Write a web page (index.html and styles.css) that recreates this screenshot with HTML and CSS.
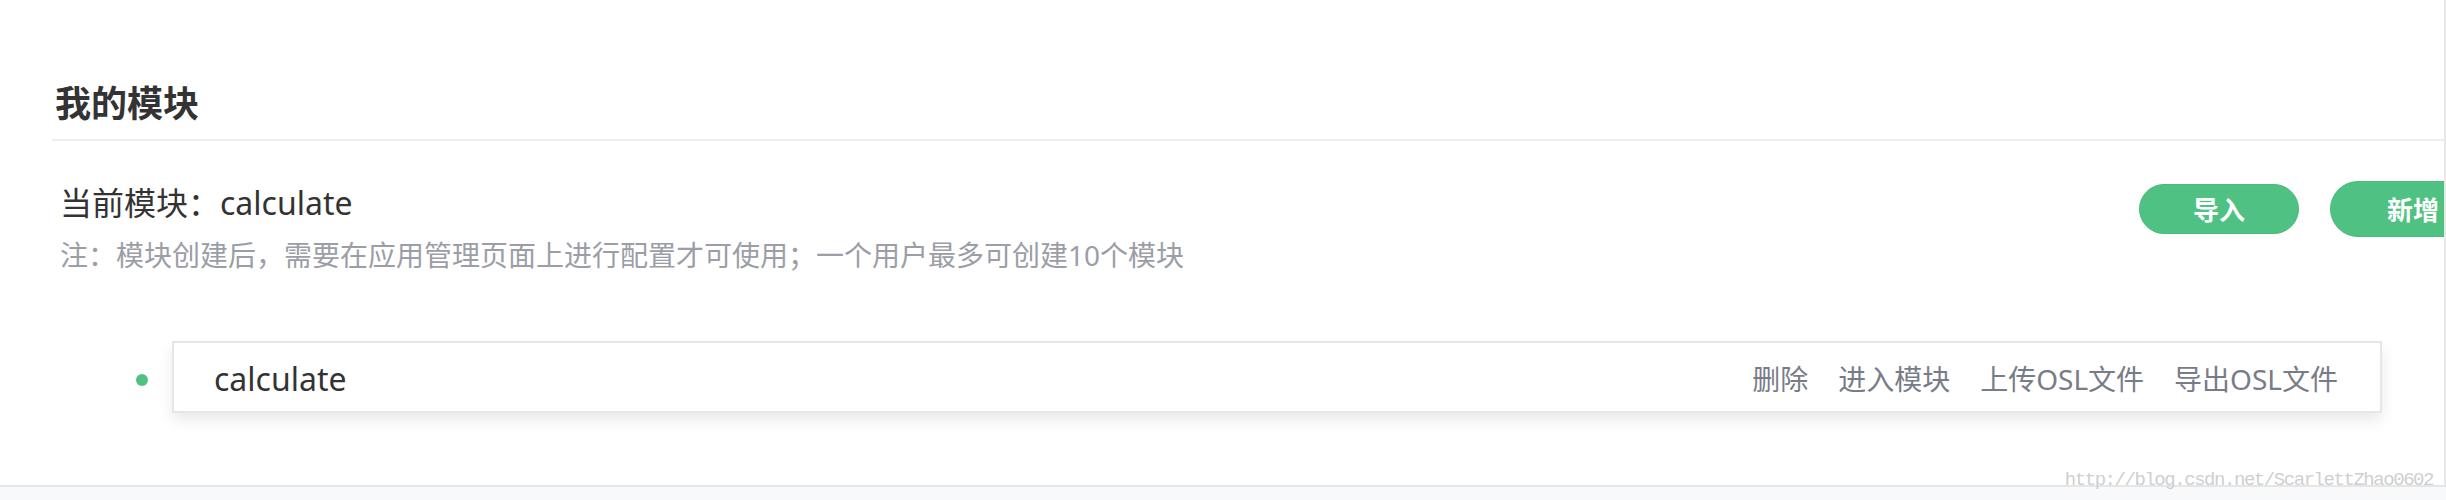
FILE: index.html
```html
<!DOCTYPE html>
<html lang="zh-CN">
  <head>
    <meta charset="UTF-8" />
    <title>我的模块</title>
    <link rel="stylesheet" href="styles.css">
  </head>
  <body>
    <div class="page">
      <div class="main">
        <div class="content">
          <h2 class="title">我的模块</h2>

          <div class="info">
            <div class="info-text">
              <p class="current">当前模块：calculate</p>
              <p class="note">注：模块创建后，需要在应用管理页面上进行配置才可使用；一个用户最多可创建10个模块</p>
            </div>
            <div class="actions">
              <button class="btn">导入</button>
              <button class="btn btn-active">新增</button>
            </div>
          </div>

          <ul class="module-list">
            <li class="module-item">
              <span class="dot"></span>
              <div class="module-card">
                <span class="module-name">calculate</span>
                <div class="module-ops">
                  <a>删除</a>
                  <a>进入模块</a>
                  <a>上传OSL文件</a>
                  <a>导出OSL文件</a>
                </div>
              </div>
            </li>
          </ul>
        </div>
      </div>
      <div class="footer"></div>
      <div class="watermark">http://blog.csdn.net/ScarlettZhao0602</div>
    </div>
  </body>
</html>
```

FILE: styles.css
```css
body {
  margin: 0;
  font-family: "Noto Sans", "Noto Sans CJK SC", sans-serif;
  background-color: #ffffff;
}
.page {
  position: relative;
  height: 500px;
  overflow: hidden;
}
.main {
  width: 2444px;
  height: 485px;
  border-right: 2px solid #e8e8e8;
  overflow: hidden;
}
.content {
  margin-left: 52px;
  width: 2444px;
  padding-top: 79px;
}
.title {
  margin: 0;
  padding: 0 0 10px 3px;
  font-size: 36px;
  font-weight: bold;
  line-height: 50px;
  color: #333;
  border-bottom: 2px solid #ededed;
}
.info {
  display: flex;
  justify-content: space-between;
  align-items: flex-start;
  padding: 40px 0 0 8px;
}
.current {
  margin: 0;
  font-size: 32px;
  line-height: 44px;
  color: #333;
}
.note {
  margin: 10px 0 0;
  font-size: 28px;
  line-height: 40px;
  color: #9b9ea7;
}
.actions {
  display: flex;
  align-items: center;
  gap: 31px;
  height: 56px;
}
.btn {
  width: 160px;
  height: 50px;
  padding: 0;
  border: 1px solid #49bb7b;
  border-radius: 25px;
  background-color: #4fc283;
  color: #fff;
  font-family: inherit;
  font-size: 26px;
  font-weight: bold;
  cursor: pointer;
}
.btn-active {
  width: 166px;
  height: 56px;
  border-radius: 28px;
}
.module-list {
  list-style: none;
  margin: 66px 0 0;
  padding: 0 114px 0 84px;
}
.module-item {
  display: flex;
  align-items: center;
  gap: 24px;
}
.dot {
  flex: none;
  width: 12px;
  height: 12px;
  margin-top: 6px;
  border-radius: 50%;
  background-color: #4fc283;
}
.module-card {
  flex: 1;
  display: flex;
  justify-content: space-between;
  height: 64px;
  padding: 4px 42px 0 40px;
  line-height: 64px;
  border: 2px solid #e6e6e6;
  background-color: #fff;
  box-shadow: 0 7px 14px rgba(0, 0, 0, 0.09);
}
.module-name {
  font-size: 32px;
  color: #333;
}
.module-ops {
  display: flex;
  gap: 30px;
  font-size: 28px;
  color: #787c88;
}
.module-ops a {
  cursor: pointer;
}
.footer {
  height: 13px;
  border-top: 2px solid #e6e6e6;
  background-color: #f8f9fb;
}
.watermark {
  position: absolute;
  right: 13px;
  top: 471px;
  font-family: "Liberation Mono", monospace;
  font-size: 19px;
  line-height: 19px;
  letter-spacing: -1.45px;
  color: #cfcfcf;
}
```
